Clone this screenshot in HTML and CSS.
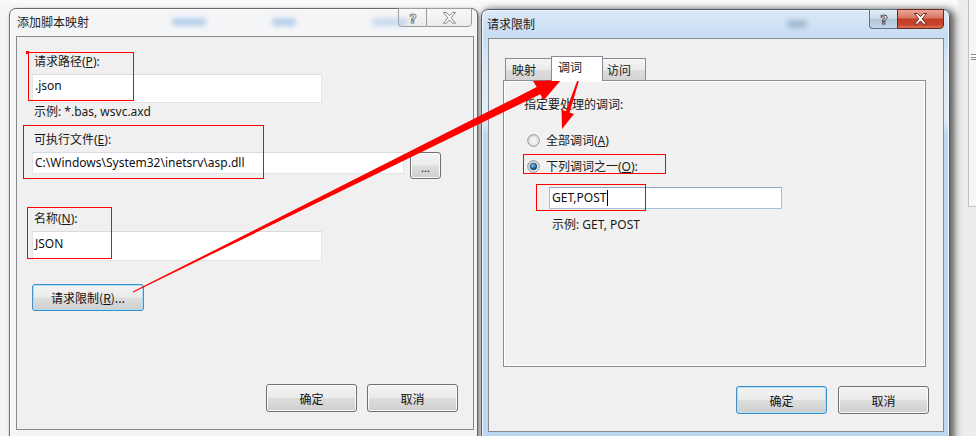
FILE: index.html
```html
<!DOCTYPE html>
<html>
<head>
<meta charset="utf-8">
<link rel="stylesheet" href="styles.css">
</head>
<body>
<div class="desk">
  <div class="bgwin"><div class="sbar"><span class="grip"></span></div></div>

  <div class="win win-left">
    <div class="titlebar">
      <span class="title">添加脚本映射</span>
      <span class="blob b1"></span><span class="blob b2"></span><span class="blob b3"></span>
      <div class="caps">
        <div class="cap cap-help">
          <svg width="12" height="14" viewBox="0 0 12 14"><text x="6" y="12" text-anchor="middle" class="qm qm-in">?</text></svg>
        </div>
        <div class="cap cap-close">
          <svg width="15" height="12" viewBox="0 0 15 12"><polygon class="xg xg-in" points="1.5,0.5 4.5,0.5 7.5,3.7 10.5,0.5 13.5,0.5 9.2,5.8 13.5,11.2 10.5,11.2 7.5,7.9 4.5,11.2 1.5,11.2 5.8,5.8"/></svg>
        </div>
      </div>
    </div>
    <div class="client">
      <div class="form">
        <div class="label l1">请求路径(<u>P</u>):</div>
        <div class="input in1">.json</div>
        <div class="hint">示例: *.bas, wsvc.axd</div>
        <div class="label l2">可执行文件(<u>E</u>):</div>
        <div class="row">
          <div class="input in2">C:\Windows\System32\inetsrv\asp.dll</div>
          <div class="btn browse">...</div>
        </div>
        <div class="label l3">名称(<u>N</u>):</div>
        <div class="input in3">JSON</div>
        <div class="btn btn-limit default">请求限制(<u>R</u>)...</div>
      </div>
      <div class="footer footer-left">
        <div class="btn">确定</div>
        <div class="btn">取消</div>
      </div>
    </div>
  </div>

  <div class="win win-right">
    <div class="titlebar">
      <span class="title">请求限制</span>
      <span class="blob b4"></span>
      <div class="caps">
        <div class="cap cap-help active">
          <svg width="12" height="14" viewBox="0 0 12 14"><text x="6" y="12" text-anchor="middle" class="qm">?</text></svg>
        </div>
        <div class="cap cap-close active">
          <svg width="15" height="12" viewBox="0 0 15 12"><polygon class="xg" points="1.5,0.5 4.5,0.5 7.5,3.7 10.5,0.5 13.5,0.5 9.2,5.8 13.5,11.2 10.5,11.2 7.5,7.9 4.5,11.2 1.5,11.2 5.8,5.8"/></svg>
        </div>
      </div>
    </div>
    <div class="client">
      <div class="tabs">
        <div class="tabstrip">
          <div class="tab t1">映射</div>
          <div class="tab t2 sel">调词</div>
          <div class="tab t3">访问</div>
        </div>
        <div class="tabpanel">
          <div class="heading">指定要处理的调词:</div>
          <div class="radio r1">
            <svg width="13" height="13" viewBox="0 0 13 13"><defs><linearGradient id="rg" x1="0" y1="0" x2="1" y2="1"><stop offset="0" stop-color="#d4d4d4"/><stop offset="1" stop-color="#fbfbfb"/></linearGradient></defs><circle cx="6.5" cy="6.5" r="5.8" fill="url(#rg)" stroke="#8e8f8f"/><circle cx="6.5" cy="6.5" r="4" fill="#f2f2f2" stroke="#dcdcdc" stroke-width="0.8"/></svg>
            <span>全部调词(<u>A</u>)</span>
          </div>
          <div class="radio r2">
            <svg width="13" height="13" viewBox="0 0 13 13"><defs><radialGradient id="dot" cx="0.4" cy="0.35" r="0.7"><stop offset="0" stop-color="#8ec5ef"/><stop offset="0.6" stop-color="#2a6aa6"/><stop offset="1" stop-color="#0f3b66"/></radialGradient></defs><circle cx="6.5" cy="6.5" r="5.8" fill="url(#rg)" stroke="#8e8f8f"/><circle cx="6.5" cy="6.5" r="3.4" fill="url(#dot)" stroke="#1d4a75" stroke-width="0.6"/></svg>
            <span>下列调词之一(<u>O</u>):</span>
          </div>
          <div class="input in4">GET,POST<span class="caret"></span></div>
          <div class="hint hint2">示例: GET, POST</div>
        </div>
      </div>
      <div class="footer footer-right">
        <div class="btn default">确定</div>
        <div class="btn">取消</div>
      </div>
    </div>
  </div>

  <div class="mark m1"></div>
  <div class="mark m2"></div>
  <div class="mark m3"></div>
  <div class="mark m4"></div>
  <div class="mark m5"></div>
  <div class="dotmark"></div>

  <svg class="arrows" width="976" height="436" viewBox="0 0 976 436">
    <polygon fill="#ff0000" points="133.2,292.4 540.3,94.3 543.5,100.5 561,80 533,81 536.7,87.1 132.8,291.6"/>
    <polygon fill="#ff0000" points="578.8,81.2 569.6,112.5 574,114 562,129 561.5,109.5 565.8,111.3 577.2,80.8"/>
  </svg>
</div>
</body>
</html>
```

FILE: styles.css
```css
* { box-sizing: border-box; }

html, body {
  margin: 0;
  padding: 0;
}

body {
  width: 976px;
  height: 436px;
  overflow: hidden;
  background: #ffffff;
  font-family: "Noto Sans", "Noto Sans CJK SC", sans-serif;
  font-size: 12px;
  color: #1a1a1a;
}

.desk {
  position: relative;
  width: 976px;
  height: 436px;
  background: linear-gradient(#fbfbfb, #f4f4f4 8px, #f4f4f4);
}

u { text-decoration: underline; text-underline-offset: 1px; }

/* background window at far right */
.bgwin {
  position: absolute;
  left: 958px;
  top: 0;
  width: 18px;
  height: 436px;
  background: #ededed;
}
.sbar {
  margin-left: 10px;
  width: 8px;
  height: 207px;
  border-left: 1px solid #c2c2c2;
  border-bottom: 1px solid #c2c2c2;
  background: #f6f6f6;
  padding-top: 54px;
  padding-left: 2px;
}
.grip {
  display: block;
  width: 5px;
  height: 6px;
  border-top: 1px solid #888;
  border-bottom: 1px solid #888;
  background: linear-gradient(#fff 0 2px, #888 2px 3px, #fff 3px);
}

/* windows */
.win {
  position: absolute;
  height: 446px;
  width: 469px;
  border-radius: 7px 7px 0 0;
}
.win-left {
  left: 9px;
  top: 8px;
  border: 1px solid #6b6b6b;
  background: #f4f5f7;
  box-shadow: 1px 1px 3px rgba(0,0,0,0.45), inset 0 0 0 1px #ffffff;
}
.win-right {
  left: 481px;
  top: 9px;
  border: 1px solid #4c5d70;
  background: linear-gradient(#dce9f6 0px, #c7ddf2 26px, #dbe9f6 60px, #e2edf8 110px, #bcd7f1 125px, #bcd7f1 100%);
  box-shadow: 3px 2px 7px 2px rgba(0,0,0,0.6), inset 0 0 0 1px #eef5fc;
}

.titlebar {
  position: relative;
  display: flex;
  align-items: flex-start;
  height: 27px;
}
.win-right .titlebar { height: 28px; }

.title {
  font-family: "Noto Sans CJK SC", sans-serif;
  font-size: 12px;
  line-height: 16px;
  margin-top: 5px;
  margin-left: 7px;
  color: #1c1c1c;
}
.win-right .title { margin-left: 5px; margin-top: 6px; }

.blob {
  position: absolute;
  top: 9px;
  height: 8px;
  border-radius: 4px;
  background: #9cc0e6;
  filter: blur(2.5px);
  opacity: 0.7;
}
.b1 { left: 162px; width: 34px; }
.b2 { left: 262px; width: 24px; }
.b3 { left: 362px; width: 36px; opacity: 0.5; }
.b4 { left: 305px; width: 20px; top: 10px; background: #8ea9c4; }

.caps {
  display: flex;
  margin-left: auto;
  margin-right: 5px;
  margin-top: -1px;
}
.cap {
  height: 19px;
  display: flex;
  align-items: center;
  justify-content: center;
  border: 1px solid #9c9c9c;
  background: linear-gradient(#f8f8f8, #ececec);
}
.cap-help { width: 28px; border-radius: 0 0 0 4px; border-right: none; }
.cap-close { width: 46px; border-radius: 0 0 4px 0; }

.cap-help.active {
  height: 20px;
  border-color: #5f7184;
  background: linear-gradient(#e6eef6, #c9d8e7 50%, #b3c6d9 51%, #c3d5e6);
}
.cap-close.active {
  height: 20px;
  width: 47px;
  border-color: #6f2419;
  background: linear-gradient(#eaa798, #d77360 45%, #c53c27 50%, #c9432c 80%, #d8745b);
}

.qm {
  font-family: "DejaVu Sans", sans-serif;
  font-weight: bold;
  font-size: 13px;
  fill: #ffffff;
  stroke: #3e4a57;
  stroke-width: 0.9;
}
.qm-in { stroke: #7a7a7a; fill: #fafafa; }

.xg { fill: #ffffff; stroke: #5a1d14; stroke-width: 0.9; }
.xg-in { stroke: #7b7b7b; fill: #fbfbfb; }

/* client area */
.client {
  margin-left: 6px;
  width: 458px;
  height: 394px;
  border: 1px solid #868a8f;
  background: #f0f0f0;
}
.win-right .client { width: 456px; height: 394px; }

.form {
  padding-left: 15px;
  display: flex;
  flex-direction: column;
  align-items: flex-start;
}

.label, .hint {
  height: 16px;
  line-height: 16px;
  padding-left: 2px;
  white-space: nowrap;
}
.l1 { margin-top: 17px; }
.hint { margin-top: 1px; }
.l2 { margin-top: 12px; }
.l3 { margin-top: 32px; }

.input {
  background: #ffffff;
  border: 1px solid #e3e4e8;
  border-top-color: #dadbe0;
  padding-left: 2px;
  white-space: nowrap;
  color: #111;
}
.in1 { width: 290px; height: 29px; line-height: 22px; margin-top: 4px; }
.in2 { width: 372px; height: 22px; line-height: 20px; }
.in3 { width: 290px; height: 30px; line-height: 24px; margin-top: 4px; }

.row {
  display: flex;
  align-items: flex-start;
  gap: 6px;
  margin-top: 4px;
}

.btn {
  width: 91px;
  height: 28px;
  border: 1px solid #707070;
  border-radius: 3px;
  background: linear-gradient(#f3f3f3 0%, #ebebeb 48%, #dddddd 52%, #cfcfcf 100%);
  box-shadow: inset 0 0 0 1px #fafafa;
  display: flex;
  align-items: center;
  justify-content: center;
  font-family: "Noto Sans CJK SC", sans-serif;
  font-size: 12px;
  color: #111;
  white-space: nowrap;
}
.btn.default {
  border-color: #3c8fc8;
  box-shadow: inset 0 0 0 1px #a8e2f8;
}
.browse {
  width: 31px;
  height: 27px;
  align-items: flex-end;
  padding-bottom: 5px;
  font-family: "Noto Sans", sans-serif;
  font-size: 11px;
  line-height: 11px;
}
.btn-limit {
  width: 112px;
  height: 27px;
  margin-top: 23px;
}

.footer {
  display: flex;
  justify-content: flex-end;
}
.footer-left {
  gap: 10px;
  padding-right: 15px;
  margin-top: 73px;
}
.footer-right {
  gap: 11px;
  padding-right: 14px;
  margin-top: 19px;
}

/* tabs */
.tabs {
  margin-left: 14px;
  margin-top: 17px;
}
.tabstrip {
  display: flex;
  align-items: flex-end;
  height: 24px;
  padding-left: 2px;
}
.tab {
  height: 22px;
  border: 1px solid #898c95;
  border-bottom: none;
  background: linear-gradient(#f5f5f5, #ebebeb 50%, #dddddd 51%, #d4d4d4);
  font-family: "Noto Sans CJK SC", sans-serif;
  line-height: 20px;
  padding-top: 1px;
  white-space: nowrap;
}
.t1 { width: 47px; padding-left: 6px; }
.t2 {
  width: 52px;
  height: 25px;
  padding-left: 6px;
  padding-top: 0;
  margin-left: -1px;
  margin-right: -1px;
  margin-bottom: -1px;
  background: #ffffff;
  position: relative;
  z-index: 1;
  line-height: 20px;
}
.t3 { width: 44px; padding-left: 4px; }

.tabpanel {
  width: 423px;
  height: 287px;
  border: 1px solid #898c95;
  background: #f1f1f1;
  box-shadow: inset 0 0 0 1px #ffffff;
  display: flex;
  flex-direction: column;
  align-items: flex-start;
}
.heading {
  margin-top: 16px;
  padding-left: 20px;
  height: 16px;
  line-height: 16px;
}
.radio {
  display: flex;
  align-items: center;
  gap: 6px;
  height: 16px;
  padding-left: 23px;
}
.radio svg { display: block; }
.r1 { margin-top: 19px; }
.r2 { margin-top: 10px; }

.in4 {
  margin-top: 13px;
  margin-left: 45px;
  width: 233px;
  height: 22px;
  line-height: 20px;
  border-color: #aac0d6;
  border-top-color: #8fa9c3;
  padding-left: 2px;
  display: flex;
  align-items: center;
}
.caret {
  display: inline-block;
  width: 1px;
  height: 16px;
  background: #000;
  margin-left: 1px;
}
.hint2 {
  margin-top: 8px;
  padding-left: 48px;
}

/* red annotations */
.mark {
  position: absolute;
  border: 1px solid #ff0000;
  pointer-events: none;
}
.m1 { left: 28px; top: 52px; width: 106px; height: 49px; }
.m2 { left: 23px; top: 125px; width: 241px; height: 54px; }
.m3 { left: 27px; top: 207px; width: 85px; height: 52px; }
.m4 { left: 523px; top: 154px; width: 143px; height: 20px; }
.m5 { left: 536px; top: 184px; width: 110px; height: 27px; }
.dotmark {
  position: absolute;
  left: 26px;
  top: 51px;
  width: 3px;
  height: 3px;
  background: #ff0000;
}

.arrows {
  position: absolute;
  left: 0;
  top: 0;
  pointer-events: none;
}
```
